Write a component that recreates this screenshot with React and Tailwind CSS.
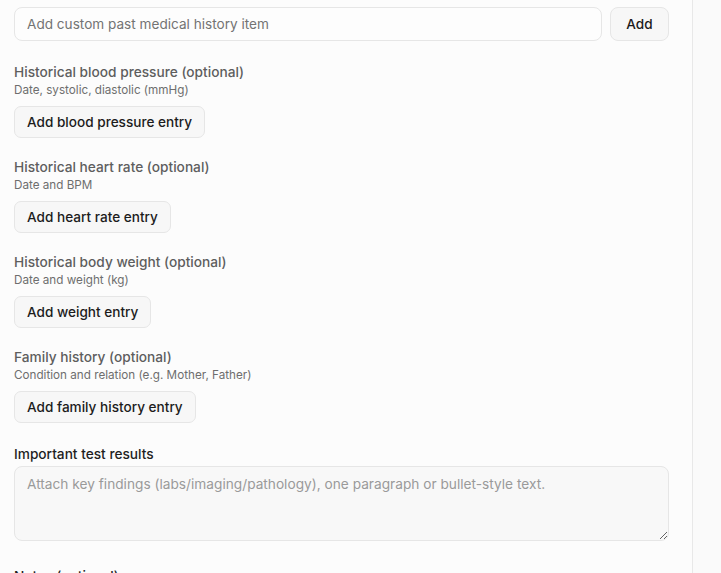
import React from "react";

const sections = [
  { title: "Historical blood pressure (optional)", sub: "Date, systolic, diastolic (mmHg)", btn: "Add blood pressure entry" },
  { title: "Historical heart rate (optional)", sub: "Date and BPM", btn: "Add heart rate entry" },
  { title: "Historical body weight (optional)", sub: "Date and weight (kg)", btn: "Add weight entry" },
  { title: "Family history (optional)", sub: "Condition and relation (e.g. Mother, Father)", btn: "Add family history entry" },
];

export default function App() {
  return (
    <div
      className="flex h-[573px] w-[721px] overflow-hidden bg-[#fcfcfc]"
      style={{ fontFamily: "Inter, 'Noto Sans', sans-serif" }}
    >
      <div className="flex w-[693px] shrink-0 flex-col border-r border-[#e8e8e8] pl-[14px] pr-[23px] pt-[7px]">
        <div className="flex shrink-0 gap-[8px]">
          <input
            className="h-[34px] flex-1 rounded-[8px] border border-[#e6e6e6] bg-[#fdfdfd] px-[12px] text-[13.6px] text-[#222] outline-none placeholder:text-[#737373]"
            placeholder="Add custom past medical history item"
          />
          <button className="h-[34px] w-[59px] rounded-[8px] border border-[#e6e6e6] bg-[#f7f7f7] text-[13.6px] font-medium text-[#1c1c1c]">
            Add
          </button>
        </div>

        <div className="mt-[21px] flex shrink-0 flex-col gap-[19px]">
          {sections.map((s) => (
            <div key={s.title} className="flex flex-col items-start">
              <div className="text-[13.7px] font-medium leading-[20px] text-[#5e5e5e]">{s.title}</div>
              <div className="text-[11.7px] leading-[16px] text-[#6e6e6e]">{s.sub}</div>
              <button className="mt-[8px] h-[32px] rounded-[7px] border border-[#e6e6e6] bg-[#f7f7f7] px-[12px] text-[13.6px] font-medium text-[#1c1c1c]">
                {s.btn}
              </button>
            </div>
          ))}
        </div>

        <div className="mt-[21px] shrink-0 text-[13.7px] font-medium leading-[20px] text-[#1f1f1f]">Important test results</div>
        <textarea
          className="mt-[2px] h-[75px] w-full shrink-0 resize-y rounded-[8px] border border-[#e6e6e6] bg-[#f8f8f8] px-[12px] py-[7px] text-[13.7px] leading-[20px] text-[#222] outline-none placeholder:text-[#9a9a9a]"
          placeholder="Attach key findings (labs/imaging/pathology), one paragraph or bullet-style text."
        />

        <div className="mt-[25px] shrink-0 text-[13.7px] font-medium leading-[20px] text-[#1f1f1f]">Notes (optional)</div>
      </div>
      <div className="flex-1 bg-[#fafafa]" />
    </div>
  );
}
